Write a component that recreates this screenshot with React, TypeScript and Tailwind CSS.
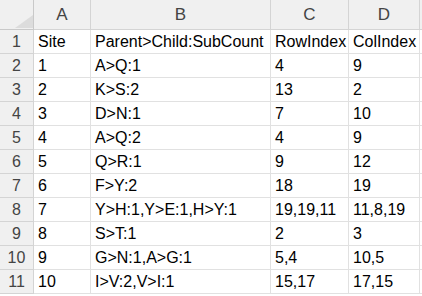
import React from "react";

const columns = ["A", "B", "C", "D"];

const rows: string[][] = [
  ["Site", "Parent>Child:SubCount", "RowIndex", "ColIndex"],
  ["1", "A>Q:1", "4", "9"],
  ["2", "K>S:2", "13", "2"],
  ["3", "D>N:1", "7", "10"],
  ["4", "A>Q:2", "4", "9"],
  ["5", "Q>R:1", "9", "12"],
  ["6", "F>Y:2", "18", "19"],
  ["7", "Y>H:1,Y>E:1,H>Y:1", "19,19,11", "11,8,19"],
  ["8", "S>T:1", "2", "3"],
  ["9", "G>N:1,A>G:1", "5,4", "10,5"],
  ["10", "I>V:2,V>I:1", "15,17", "17,15"],
];

export default function App() {
  return (
    <div
      className="w-[422px] h-[296px] overflow-hidden bg-white text-[16px] text-black"
      style={{ fontFamily: '"Liberation Sans", Arial, sans-serif' }}
    >
      <div className="grid grid-cols-[34px_57px_180px_78px_71px_1fr]">
        {/* Header row */}
        <div className="relative h-[30px] bg-[#f0f0f0] border-r border-b border-[#c9c9c9]">
          <svg className="absolute left-[15px] top-[15px]" width="18" height="13" viewBox="0 0 18 13">
            <polygon points="18,0 18,13 0,13" fill="#dcdcdc" />
          </svg>
        </div>
        {columns.map((c) => (
          <div
            key={c}
            className="h-[30px] bg-[#f0f0f0] border-r border-b border-[#d4d4d4] flex items-end justify-center pb-[2px] text-[17px] text-[#444]"
          >
            {c}
          </div>
        ))}
        <div className="h-[30px] bg-[#f0f0f0] border-b border-[#d4d4d4]" />

        {/* Data rows */}
        {rows.map((r, i) => (
          <React.Fragment key={i}>
            <div className="h-[24px] bg-[#f0f0f0] border-r border-b border-[#d4d4d4] flex items-center justify-center text-[#444]">
              {i + 1}
            </div>
            {r.map((cell, j) => (
              <div
                key={j}
                className="h-[24px] border-r border-b border-[#e1e1e1] flex items-center pl-[4px] whitespace-nowrap overflow-hidden"
              >
                {cell}
              </div>
            ))}
            <div className="h-[24px] border-b border-[#e1e1e1]" />
          </React.Fragment>
        ))}
      </div>
    </div>
  );
}
